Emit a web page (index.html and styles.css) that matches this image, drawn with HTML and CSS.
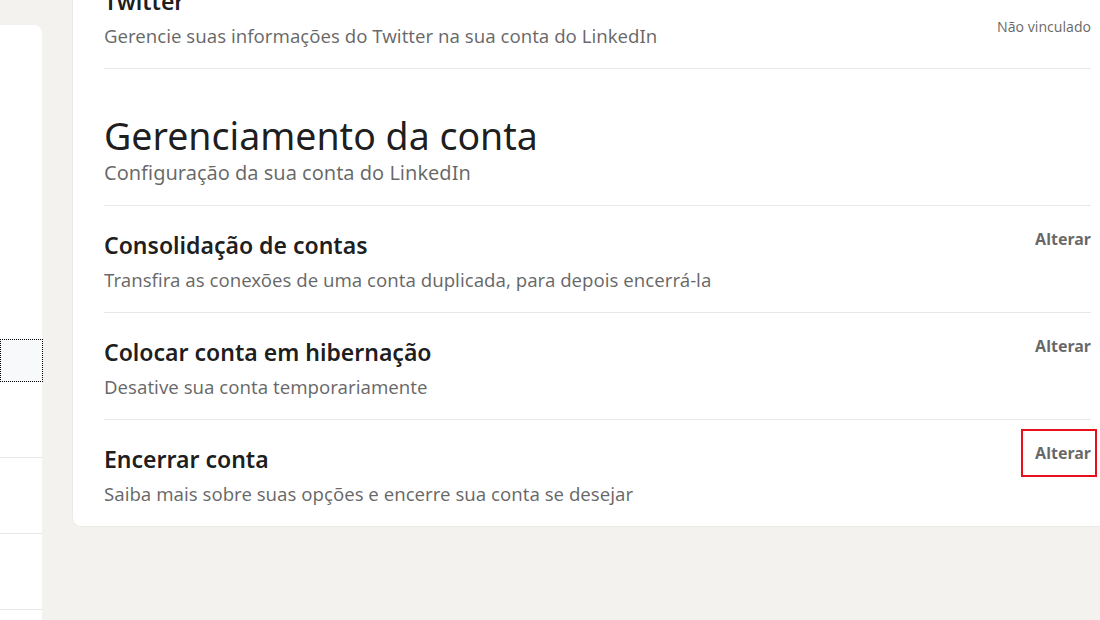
FILE: index.html
```html
<!DOCTYPE html>
<html lang="pt-BR">
	<head>
		<meta charset="UTF-8">
		<title>Configurações da conta</title>
		<link rel="stylesheet" href="styles.css">
	</head>
	<body>
		<div class="page">
			<aside class="sidebar">
				<ul class="nav">
					<li class="nav-top"></li>
					<li class="nav-focus"></li>
					<li class="nav-item"></li>
					<li class="nav-item"></li>
					<li class="nav-item"></li>
					<li class="nav-item"></li>
				</ul>
			</aside>

			<main class="card">
				<section class="section">
					<div class="row">
						<div class="row-text">
							<h3 class="row-title">Twitter</h3>
							<p class="row-sub">Gerencie suas informações do Twitter na sua conta do LinkedIn</p>
						</div>
						<span class="status">Não vinculado</span>
					</div>
				</section>

				<section class="section">
					<div class="section-head">
						<h2>Gerenciamento da conta</h2>
						<p class="head-sub">Configuração da sua conta do LinkedIn</p>
					</div>
					<div class="row">
						<div class="row-text">
							<h3 class="row-title">Consolidação de contas</h3>
							<p class="row-sub">Transfira as conexões de uma conta duplicada, para depois encerrá-la</p>
						</div>
						<a class="action" href="#">Alterar</a>
					</div>
					<div class="row">
						<div class="row-text">
							<h3 class="row-title">Colocar conta em hibernação</h3>
							<p class="row-sub">Desative sua conta temporariamente</p>
						</div>
						<a class="action" href="#">Alterar</a>
					</div>
					<div class="row">
						<div class="row-text">
							<h3 class="row-title">Encerrar conta</h3>
							<p class="row-sub">Saiba mais sobre suas opções e encerre sua conta se desejar</p>
						</div>
						<a class="action highlight" href="#">Alterar</a>
					</div>
				</section>
			</main>
		</div>
	</body>
</html>
```

FILE: styles.css
```css
html, body {
	margin: 0;
	padding: 0;
	height: 100%;
	overflow: hidden;
}

body {
	background: #f3f2ef;
	font-family: "Noto Sans", "Open Sans", sans-serif;
	color: rgba(0, 0, 0, 0.9);
}

h2, h3, p, ul {
	margin: 0;
	padding: 0;
}

.page {
	display: flex;
	align-items: flex-start;
	gap: 31px;
	width: 1115px;
}

/* left nav, mostly scrolled out of view */
.sidebar {
	width: 42px;
	margin-top: 25px;
	background: #fff;
	border-radius: 0 8px 0 0;
}

.nav { list-style: none; }

.nav-top { height: 314px; }

.nav-focus {
	height: 43px;
	width: 43px;
	background: #f7f9fb;
	outline: 1px dotted #000;
	outline-offset: -1px;
}

.nav-item {
	height: 75px;
	border-bottom: 1px solid #e6e6e6;
}

.nav-item:last-child { height: 120px; }

.card {
	flex: 1;
	margin-top: -39px;
	padding: 0 24px 0 31px;
	background: #fff;
	border-radius: 8px;
	box-shadow: 0 0 0 1px rgba(0, 0, 0, 0.03);
}

.section + .section { border-top: 1px solid #e8e8e8; }

.section-head { padding: 45px 0 20px; }

.section-head h2 {
	font-size: 37.5px;
	font-weight: 400;
	line-height: 44px;
	color: rgba(0, 0, 0, 0.9);
}

.head-sub {
	margin-top: 3px;
	font-size: 20px;
	line-height: 24px;
	color: rgba(0, 0, 0, 0.6);
}

.row {
	display: flex;
	justify-content: space-between;
	align-items: flex-start;
	padding: 23px 0 20px;
	border-top: 1px solid #e8e8e8;
}

.row-title {
	font-size: 23px;
	font-weight: 600;
	line-height: 32px;
	color: rgba(0, 0, 0, 0.9);
}

.row-sub {
	margin-top: 7px;
	font-size: 18.6px;
	line-height: 24px;
	color: rgba(0, 0, 0, 0.6);
}

.status {
	margin-top: 32px;
	font-size: 14px;
	line-height: 20px;
	color: rgba(0, 0, 0, 0.6);
}

.action {
	position: relative;
	font-size: 16px;
	font-weight: 700;
	line-height: 20px;
	color: rgba(0, 0, 0, 0.6);
	text-decoration: none;
}

.highlight::after {
	content: "";
	position: absolute;
	top: -14px;
	bottom: -14px;
	left: -14px;
	right: -6px;
	border: 2px solid #e8101a;
}
```
